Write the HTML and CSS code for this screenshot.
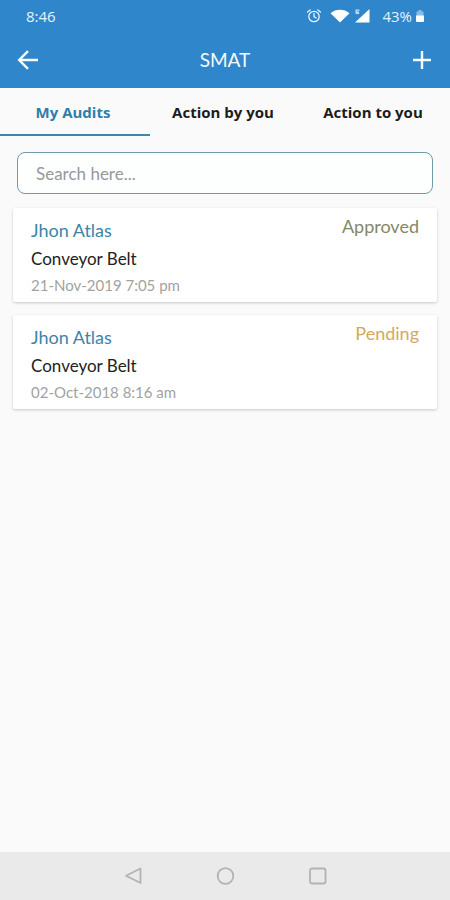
FILE: index.html
```html
<!DOCTYPE html>
<html lang="en">
<head>
<meta charset="utf-8">
<meta name="viewport" content="width=device-width, initial-scale=1">
<title>SMAT</title>
<link rel="stylesheet" href="styles.css">
</head>
<body>
<header class="header">
  <div class="status-bar">
    <span class="clock">8:46</span>
    <div class="status-icons">
      <svg class="alarm" width="16" height="16" viewBox="0 0 16 16" fill="none" stroke="currentColor" stroke-width="1.3" stroke-linecap="round" aria-hidden="true"><circle cx="8" cy="8.5" r="5.2"/><path d="M8 5.5v3.2l2 1.2M1.5 4 4.2 1.9M14.500 4 11.800 1.900"/></svg>
      <svg width="20" height="14" viewBox="0 0 20 14" fill="#fff" aria-hidden="true"><path d="M.5 4.200C6-.4 14-.4 19.500 4.200L10 13.500z"/></svg>
      <svg width="16" height="14" viewBox="0 0 16 14" fill="#fff" aria-hidden="true"><path d="M15.500 0v13.500H1z"/><path d="M1.500 .5h4v1.200h-2.600v.8h2.200v2.500h-3.600z" opacity=".7"/></svg>
      <span class="percent">43%</span>
      <svg width="8" height="12" viewBox="0 0 8 12" fill="#fff" aria-hidden="true"><path d="M2.500 0h3v1.500H7.500V6H.5V1.500h2z" opacity=".45"/><path d="M0 5.500h8V11a1 1 0 0 1-1 1H1a1 1 0 0 1-1-1z"/></svg>
    </div>
  </div>
  <div class="app-bar">
    <button class="icon-button" type="button" aria-label="Back"><svg width="22" height="20" viewBox="0 0 22 20" fill="none" stroke="currentColor" stroke-width="2.400" aria-hidden="true"><path d="M21 10H2.500M11 1.200 2.200 10l8.800 8.800"/></svg></button>
    <h1 class="title">SMAT</h1>
    <button class="icon-button" type="button" aria-label="Add audit"><svg width="20" height="20" viewBox="0 0 20 20" fill="none" stroke="currentColor" stroke-width="2.400" aria-hidden="true"><path d="M10 1v18M1 10h18"/></svg></button>
  </div>
</header>
<nav class="tabs">
  <a class="tab active" href="#mine" aria-current="page">My Audits</a>
  <a class="tab" href="#by-you">Action by you</a>
  <a class="tab" href="#to-you">Action to you</a>
</nav>
<main class="content">
  <input class="search" type="search" placeholder="Search here..." aria-label="Search audits">
  <article class="card">
    <div class="details">
      <h2 class="name">Jhon Atlas</h2>
      <p class="subject">Conveyor Belt</p>
      <p class="date">21-Nov-2019 7:05 pm</p>
    </div>
    <span class="state approved">Approved</span>
  </article>
  <article class="card">
    <div class="details">
      <h2 class="name">Jhon Atlas</h2>
      <p class="subject">Conveyor Belt</p>
      <p class="date">02-Oct-2018 8:16 am</p>
    </div>
    <span class="state pending">Pending</span>
  </article>
</main>
<footer class="nav-bar">
  <button class="nav-button" type="button" aria-label="Back"><svg width="20" height="20" viewBox="0 0 20 20" aria-hidden="true"><path d="M17.500 2.500v14.500L3 9.800z"/></svg></button>
  <button class="nav-button" type="button" aria-label="Home"><svg width="20" height="20" viewBox="0 0 20 20" aria-hidden="true"><circle cx="10.500" cy="10" r="7.800"/></svg></button>
  <button class="nav-button" type="button" aria-label="Recent apps"><svg width="20" height="20" viewBox="0 0 20 20" aria-hidden="true"><rect x="3" y="2.500" width="15.500" height="15" rx="2"/></svg></button>
</footer>
</body>
</html>
```
FILE: styles.css
```css
* {
  box-sizing: border-box;
}

body {
  margin: 0;
  min-height: 100vh;
  display: flex;
  flex-direction: column;
  background: #fafafa;
  color: #222;
  font-family: Lato, "Open Sans", sans-serif;
}

h1, h2, p {
  margin: 0;
  font-weight: 400;
}

button {
  padding: 0;
  border: 0;
  background: none;
  color: inherit;
}

svg {
  display: block;
}

.header {
  background: #2f86ca;
  color: #f4fcff;
}

.status-bar {
  display: flex;
  justify-content: space-between;
  align-items: center;
  height: 32px;
  padding: 0 26px;
  color: #e3f5ff;
  font: 15px/20px "Open Sans", sans-serif;
}

.status-icons {
  display: flex;
  align-items: center;
  gap: 4px;
}

.alarm {
  margin-right: 4px;
}

.percent {
  margin-left: 8px;
}

.app-bar {
  display: grid;
  grid-template-columns: 40px 1fr 40px;
  align-items: center;
  height: 56px;
  padding: 0 8px;
}

.icon-button {
  display: grid;
  place-items: center;
  height: 40px;
}

.title {
  font-size: 19px;
  line-height: 24px;
  text-align: center;
}

.tabs {
  display: grid;
  grid-template-columns: repeat(3, 1fr);
}

.tab {
  padding: 14px 4px 12px 0;
  border-bottom: 2px solid transparent;
  color: #1c1c1c;
  font: 700 15px/20px "Open Sans", sans-serif;
  text-align: center;
  text-decoration: none;
}

.tab.active {
  border-color: #4186ab;
  color: #327cab;
}

.content {
  flex: 1;
  display: flex;
  flex-direction: column;
  gap: 13px;
  padding: 16px 13px;
}

.search {
  height: 42px;
  margin: 0 4px 1px;
  padding: 0 18px;
  border: 1px solid #6e9aa9;
  border-radius: 8px;
  background: #fdffff;
  appearance: none;
  color: #222;
  font: 17px/20px Lato, "Open Sans", sans-serif;
}

.search::placeholder {
  color: #989898;
}

.card {
  display: flex;
  justify-content: space-between;
  padding: 6px 18px 5px;
  border-radius: 2px;
  background: #fff;
  box-shadow: 0 1px 3px rgba(0, 0, 0, 0.2);
}

.details {
  padding-top: 4px;
}

.name {
  color: #3b84aa;
  font-size: 18px;
  line-height: 24px;
}

.subject {
  margin: 5px 0 2px;
  font-size: 17px;
  line-height: 24px;
}

.date {
  color: #a2a2a2;
  font-size: 15px;
  line-height: 24px;
}

.state {
  font-size: 18px;
  line-height: 24px;
}

.approved {
  color: #858864;
}

.pending {
  color: #d3aa59;
}

.nav-bar {
  display: flex;
  justify-content: center;
  align-items: center;
  gap: 72px;
  height: 48px;
  background: #eaeaea;
}

.nav-button svg {
  fill: none;
  stroke: #b3b3b3;
  stroke-width: 1.8px;
  stroke-linejoin: round;
}
```
